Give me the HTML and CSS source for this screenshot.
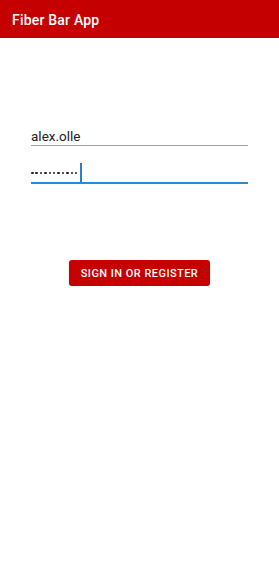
FILE: index.html
```html
<!DOCTYPE html>
<html lang="en">
<head>
  <meta charset="UTF-8" />
  <meta name="viewport" content="width=device-width, initial-scale=1.0"/>
  <title>Fiber Bar App</title>
  <link rel="stylesheet" href="styles.css">
</head>
<body>

  <!-- App bar -->
  <div class="appbar">Fiber Bar App</div>

  <!-- Login form -->
  <div class="form">
    <div class="field">
      <span class="value">alex.olle</span>
    </div>
    <div class="field focused">
      <span class="dots">
        <i></i><i></i><i></i><i></i><i></i><i></i><i></i><i></i><i></i><i></i><i></i>
      </span>
      <span class="caret"></span>
    </div>
  </div>

  <div class="actions">
    <button class="btn">SIGN IN OR REGISTER</button>
  </div>

</body>
</html>
```

FILE: styles.css
```css
body {
  font-family: 'Roboto', 'Liberation Sans', sans-serif;
  margin: 0;
  background: #ffffff;
  color: #212121;
}
.appbar {
  height: 38px;
  line-height: 40px;
  background: #c40000;
  color: white;
  font-size: 14px;
  font-weight: 500;
  padding-left: 12px;
  letter-spacing: 0.2px;
}
.form {
  margin: 89px 31px 0 31px;
  display: flex;
  flex-direction: column;
  gap: 18px;
}
.field {
  display: flex;
  align-items: center;
  height: 18px;
  line-height: 18px;
  font-size: 13.5px;
  border-bottom: 1px solid #a0a0a0;
}
.field.focused {
  align-items: flex-end;
  border-bottom: 2px solid #2a8ad4;
}
.dots {
  display: flex;
  gap: 1.9px;
  margin-bottom: 8px;
}
.dots i {
  width: 2.5px;
  height: 2.5px;
  border-radius: 50%;
  background: #222;
}
.caret {
  width: 2px;
  height: 19px;
  margin-left: 3px;
  background: #2f7fc4;
}
.actions {
  display: flex;
  justify-content: center;
  margin-top: 76px;
}
.btn {
  width: 141px;
  height: 26px;
  padding: 0;
  background: #c40000;
  color: white;
  border: none;
  border-radius: 3px;
  font-family: 'Roboto', 'Liberation Sans', sans-serif;
  font-size: 11px;
  font-weight: 500;
  letter-spacing: 0.45px;
  box-shadow: 0 1px 2px rgba(0,0,0,0.2);
}
```
